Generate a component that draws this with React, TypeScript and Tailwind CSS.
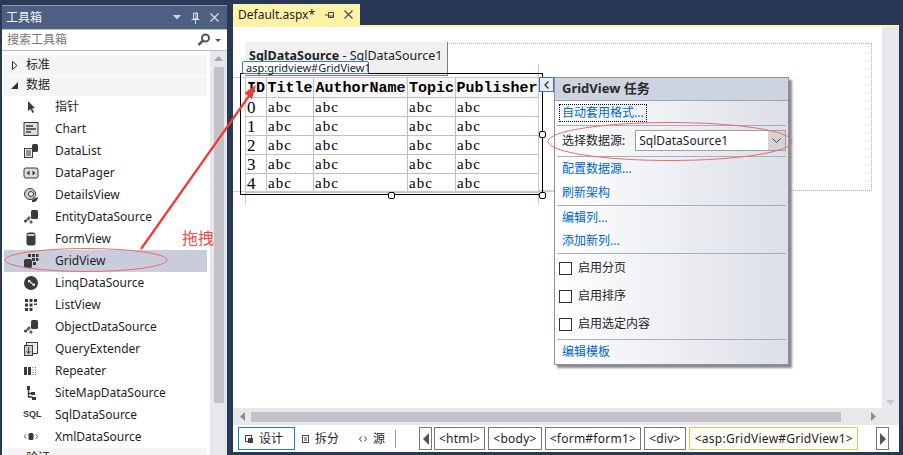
import React from 'react'

const sans = "font-['Noto_Sans','Noto_Sans_CJK_SC',sans-serif]"

function Icon({ name }: { name: string }) {
  const c = '#3a3a3a'
  switch (name) {
    case 'pointer':
      return <svg width="16" height="16" viewBox="0 0 16 16"><path d="M5 2 L5 12 L7.5 10 L9.5 14 L11 13 L9 9.5 L12 9 Z" fill={c} /></svg>
    case 'chart':
      return (
        <svg width="16" height="16" viewBox="0 0 16 16">
          <rect x="1" y="1.5" width="14" height="13" fill="#ddd" stroke={c} strokeWidth="1" />
          <path d="M3 5h7M3 8h10M3 11h5" stroke={c} strokeWidth="1.6" />
        </svg>
      )
    case 'datalist':
      return (
        <svg width="16" height="16" viewBox="0 0 16 16">
          <rect x="1.5" y="5.5" width="8" height="9" fill="#eee" stroke={c} />
          <path d="M3 8h5M3 10h5M3 12h5" stroke={c} />
          <rect x="9" y="1" width="6" height="8" rx="1.5" fill={c} />
        </svg>
      )
    case 'pager':
      return (
        <svg width="16" height="16" viewBox="0 0 16 16">
          <rect x="1" y="3" width="14" height="10" rx="2" fill="#ddd" stroke={c} />
          <path d="M3.5 8l3-2.5v5zM12.5 8l-3-2.5v5z" fill={c} />
        </svg>
      )
    case 'details':
      return (
        <svg width="16" height="16" viewBox="0 0 16 16">
          <circle cx="7" cy="7" r="5.5" fill="#ccc" stroke={c} />
          <circle cx="8" cy="7" r="2.5" fill="#eee" stroke={c} />
          <path d="M9 15a5 5 0 0 0 6-5l-3 1-3 2z" fill={c} />
        </svg>
      )
    case 'source':
      return (
        <svg width="16" height="16" viewBox="0 0 16 16">
          <rect x="8" y="1" width="7" height="9" rx="1.5" fill={c} />
          <path d="M3 10l3-3 2 2-3 3zM6 13l2-2 2 2-2 2z" fill="#666" />
          <circle cx="2.5" cy="12" r="1.5" fill={c} />
        </svg>
      )
    case 'form':
      return <svg width="16" height="16" viewBox="0 0 16 16"><rect x="3.5" y="1.5" width="9" height="13" rx="2.5" fill={c} /><rect x="4.5" y="3" width="7" height="2" fill="#ccc" /></svg>
    case 'grid':
      return (
        <svg width="16" height="16" viewBox="0 0 16 16">
          <path d="M5 1h3v3H5zM9 1h3v3H9zM13 1h2.500v3H13zM9 5h3v3H9zM13 5h2.500v3H13zM10 9h3v3h-3z" fill={c} />
          <rect x="1" y="6" width="8" height="9" rx="2" fill={c} />
        </svg>
      )
    case 'linq':
      return (
        <svg width="16" height="16" viewBox="0 0 16 16">
          <circle cx="8" cy="8" r="7" fill={c} />
          <path d="M5 5h3l-1 1 4 3 1-1v3H9l1-1-4-3-1 1z" fill="#ddd" />
        </svg>
      )
    case 'list':
      return <svg width="16" height="16" viewBox="0 0 16 16"><path d="M2 2h3v3H2zM6.5 2h3v3h-3zM11 2h3v3h-3zM2 6.5h3v3H2zM6.5 6.5h3v3h-3zM11 6.5h3v1.500h-3zM2 11h3v3H2zM6.500 11h3v3h-3z" fill={c} /></svg>
    case 'query':
      return (
        <svg width="16" height="16" viewBox="0 0 16 16">
          <rect x="3.500" y="1.500" width="11" height="11" fill="#eee" stroke={c} />
          <rect x="1.500" y="4.500" width="8" height="10" fill="#ccc" stroke={c} />
          <path d="M5.500 6v6M3.500 10l2 2.500 2-2.500" stroke={c} fill="none" />
        </svg>
      )
    case 'repeater':
      return <svg width="16" height="16" viewBox="0 0 16 16"><path d="M1 4h3v8H1zM5 4h3v8H5z" fill={c} /><path d="M9.500 4h1v1h-1zM12 4h1v1h-1zM9.500 6.500h1v1h-1zM12 6.500h1v1h-1zM9.500 9h1v1h-1zM12 9h1v1h-1zM9.500 11h1v1h-1zM12 11h1v1h-1z" fill="#666" /></svg>
    case 'sitemap':
      return <svg width="16" height="16" viewBox="0 0 16 16"><path d="M4 1h3v4H4zM8 7h4v3H8zM9 12h4v3H9z" fill={c} /><path d="M5.500 5v7h4M5.500 8.500h3" stroke={c} strokeWidth="1.400" fill="none" /></svg>
    case 'xml':
      return (
        <svg width="16" height="16" viewBox="0 0 16 16">
          <rect x="5.500" y="4" width="5" height="7" rx="1.500" fill={c} />
          <path d="M3.500 5.500L1 7.500l2.500 2M12.500 5.500L15 7.500l-2.500 2" stroke="#666" fill="none" />
        </svg>
      )
    default:
      return <span className="text-[9px] font-bold text-[#3a3a3a] font-['Liberation_Sans',sans-serif]">SQL</span>
  }
}

const tools = [
  ['pointer', '指针'],
  ['chart', 'Chart'],
  ['datalist', 'DataList'],
  ['pager', 'DataPager'],
  ['details', 'DetailsView'],
  ['source', 'EntityDataSource'],
  ['form', 'FormView'],
  ['grid', 'GridView'],
  ['linq', 'LinqDataSource'],
  ['list', 'ListView'],
  ['source', 'ObjectDataSource'],
  ['query', 'QueryExtender'],
  ['repeater', 'Repeater'],
  ['sitemap', 'SiteMapDataSource'],
  ['sql', 'SqlDataSource'],
  ['xml', 'XmlDataSource'],
]

function Toolbox() {
  return (
    <div className="w-[225px] h-[455px] overflow-hidden shrink-0 flex flex-col">
      <div className="h-[24px] mt-[5px] bg-[#4d6082] flex items-center pl-[4px] pr-[8px] text-[12px] shrink-0 border-t border-[#8a9ab5]">
        <span className="text-[#f2f4f8]">工具箱</span>
        <div className="ml-auto flex items-center gap-[10px]">
          <svg width="8" height="5" viewBox="0 0 8 5"><path d="M0 0h8L4 4.500z" fill="#cfd6e2" /></svg>
          <svg width="9" height="12" viewBox="0 0 9 12"><path d="M2.500 1h4v6h-4zM0.500 7.500h8M4.500 8v4M5 1v6" stroke="#dfe4ec" fill="none" /></svg>
          <svg width="9" height="9" viewBox="0 0 9 9"><path d="M0.500 0.500l8 8M8.500 0.500l-8 8" stroke="#cfd6e2" strokeWidth="1.400" /></svg>
        </div>
      </div>
      <div className="h-[22px] bg-white border-y border-[#b4c0d4] flex items-center pl-[5px] pr-[6px] text-[12px] text-[#777] shrink-0">
        <span>搜索工具箱</span>
        <svg className="ml-auto" width="15" height="14" viewBox="0 0 15 14">
          <circle cx="8.500" cy="5" r="3.500" fill="none" stroke="#555" strokeWidth="2" />
          <path d="M6 7.500L1.500 12" stroke="#555" strokeWidth="2.500" />
        </svg>
        <svg className="ml-[3px]" width="6" height="3" viewBox="0 0 6 3"><path d="M0 0h6L3 3z" fill="#555" /></svg>
      </div>
      <div className="flex-1 bg-white flex pl-[2px] min-h-0">
        <div className="w-[203px] pt-[4px] text-[12px] text-[#1e1e1e]">
          <div className="h-[20px] mb-[1px] bg-[#f5f5f5] flex items-center">
            <svg className="ml-[8px] mr-[6px]" width="6" height="9" viewBox="0 0 6 9"><path d="M0.500 0.500L5 4.500L0.500 8.500z" fill="none" stroke="#333" /></svg>
            <span className="ml-[2px]">标准</span>
          </div>
          <div className="h-[20px] pb-[2px] bg-[#f5f5f5] flex items-center">
            <svg className="ml-[7px] mr-[6px]" width="7" height="7" viewBox="0 0 7 7"><path d="M7 0v7H0z" fill="#333" /></svg>
            <span className="ml-[2px]">数据</span>
          </div>
          {tools.map(([icon, label]) => (
            <div key={label} className={`h-[22px] flex items-center ${label === 'GridView' ? 'bg-[#c9ccdb]' : ''}`}>
              <div className="w-[51px] pl-[19px] flex items-center"><Icon name={icon} /></div>
              <span>{label}</span>
            </div>
          ))}
          <div className="h-[20px] bg-[#f5f5f5] flex items-center">
            <svg className="ml-[7px] mr-[6px]" width="7" height="7" viewBox="0 0 7 7"><path d="M7 0v7H0z" fill="#333" /></svg>
            <span className="ml-[2px]">验证</span>
          </div>
        </div>
        <div className="ml-[3px] w-[17px] h-[404px] bg-[#e8e8ec] flex flex-col items-center pt-[5px]">
          <svg width="9" height="5" viewBox="0 0 9 5"><path d="M4.500 0L9 5H0z" fill="#a5a7ad" /></svg>
          <div className="w-[10px] h-[336px] mt-[6px] bg-[#c2c3c9]" />
        </div>
      </div>
    </div>
  )
}

const rows = ['0', '1', '2', '3', '4']
const tdClass = "border border-[#c0c0c0] px-[1px] pt-[1px] h-[19px] align-middle font-['Liberation_Serif',serif]"

function Grid() {
  const widths = [21, 47, 94, 48, 83]
  return (
    <table className="absolute left-[12px] top-[50px] border-collapse table-fixed w-[293px] bg-white text-black font-['Liberation_Mono',monospace]">
      <colgroup>{widths.map((w, i) => <col key={i} style={{ width: w }} />)}</colgroup>
      <tbody>
        <tr className="h-[20px] text-[15px] font-bold leading-[15px] bg-[#f8f8f8]">
          {['ID', 'Title', 'AuthorName', 'Topic', 'Publisher'].map(h => (
            <td key={h} className="border border-[#c0c0c0] p-0 pt-[2px] text-center whitespace-nowrap overflow-hidden">{h}</td>
          ))}
        </tr>
        {rows.map(r => (
          <tr key={r} className="h-[19px] text-[15px] tracking-[1px] leading-[15px]">
            <td className={`${tdClass} text-[17px] leading-[15px]`}>{r}</td>
            <td className={tdClass}>abc</td>
            <td className={tdClass}>abc</td>
            <td className={tdClass}>abc</td>
            <td className={tdClass}>abc</td>
          </tr>
        ))}
      </tbody>
    </table>
  )
}

const handle = 'absolute w-[7px] h-[7px] bg-white border border-black rounded-[2px]'
const link = 'text-[#0066cc] text-[12px] leading-[16px]'
const sep = 'h-[1px] bg-[#a5afc0] mx-[2px]'

function TaskPanel() {
  return (
    <div className="absolute left-[321px] top-[50px] w-[235px] h-[288px] border border-[#8792a8] shadow-[3px_3px_2px_rgba(90,90,90,0.7)] bg-gradient-to-r from-white to-[#dcdfe7] flex flex-col text-[12px] text-[#1e1e1e]">
      <div className="h-[23px] bg-[#cdd3df] border-b border-[#99a3b5] flex items-center pl-[7px] font-bold text-[13px] text-[#2a2a2a] shrink-0">GridView 任务</div>
      <div className="h-[24px] pl-[4px] flex items-center">
        <span className={`${link} border border-dotted border-black px-[2px]`}>自动套用格式...</span>
      </div>
      <div className={sep} />
      <div className="h-[30px] flex items-center pl-[7px]">
        <span>选择数据源:</span>
        <div className="ml-[10px] w-[151px] h-[21px] bg-white border border-[#a0a0a0] flex items-center pl-[3px]">
          <span>SqlDataSource1</span>
          <div className="ml-auto w-[17px] h-[19px] bg-[#d4d4d4] flex items-center justify-center">
            <svg width="9" height="5" viewBox="0 0 9 5"><path d="M0.500 0.500L4.500 4.500L8.500 0.500" fill="none" stroke="#444" /></svg>
          </div>
        </div>
      </div>
      <div className={sep} />
      <div className="h-[24px] pl-[7px] flex items-center"><span className={link}>配置数据源...</span></div>
      <div className="h-[24px] pl-[7px] flex items-center"><span className={link}>刷新架构</span></div>
      <div className={sep} />
      <div className="h-[24px] pl-[7px] flex items-center"><span className={link}>编辑列...</span></div>
      <div className="h-[24px] pl-[7px] flex items-center"><span className={link}>添加新列...</span></div>
      <div className={sep} />
      {['启用分页', '启用排序', '启用选定内容'].map(t => (
        <div key={t} className="h-[28px] flex items-center pl-[4px]">
          <div className="w-[13px] h-[13px] border border-[#333] mr-[6px]" />
          <span>{t}</span>
        </div>
      ))}
      <div className={`${sep} mt-[1px]`} />
      <div className="h-[24px] pl-[7px] flex items-center"><span className={link}>编辑模板</span></div>
    </div>
  )
}

function Designer() {
  return (
    <div className="relative flex-1 bg-white overflow-hidden">
      {/* design surface, offsets are relative to x=233 y=27 */}
      <div className="absolute left-[214px] top-[16px] w-[425px] h-[148px] border-t border-r border-b border-dotted border-[#b0b0b0]" />
      <div className="absolute left-[12px] top-[15px] w-[203px] h-[34px] bg-[#f0f0f0] border-r border-b border-[#808080] pl-[4px] pt-[5px] text-[12.500px] leading-[18px] text-[#222] whitespace-nowrap">
        <b>SqlDataSource</b> - SqlDataSource1
      </div>
      <div className="absolute left-[9px] top-[34px] w-[127px] h-[13px] bg-white border border-[#3a78c8] rounded-[2px] text-[11px] leading-[11px] pl-[3px] text-[#222] z-10 whitespace-nowrap">asp:gridview#GridView1</div>
      <Grid />
      <div className="absolute left-0 top-[50px] w-[321px] h-[1px] bg-[#dcc4c4]" />
      <div className="absolute left-0 top-[164px] w-[321px] h-[1px] bg-[#dcc4c4]" />
      <div className="absolute left-[12px] top-[37px] w-[1px] h-[141px] bg-[#dcc4c4]" />
      <div className="absolute left-[305px] top-[37px] w-[1px] h-[141px] bg-[#dcc4c4]" />
      <div className="absolute left-[7px] top-[46px] w-[303px] h-[122px] border border-black" />
      <div className={`${handle} left-[306px] top-[104px]`} />
      <div className={`${handle} left-[155px] top-[165px]`} />
      <div className={`${handle} left-[306px] top-[165px]`} />
      <div className="absolute left-[306px] top-[50px] w-[15px] h-[15px] bg-[#e8ecf4] border border-[#3a78c8] flex items-center justify-center">
        <svg width="5" height="8" viewBox="0 0 5 8"><path d="M4.500 0.500L1 4l3.500 3.500" fill="none" stroke="#223" strokeWidth="1.200" /></svg>
      </div>
      <TaskPanel />
    </div>
  )
}

const crumbs = ['<html>', '<body>', '<form#form1>', '<div>']

function BottomBar() {
  return (
    <div className="h-[27px] bg-white flex items-center pl-[5px] text-[12px] text-[#1e1e1e] shrink-0">
      <div className="w-[57px] h-[23px] border border-[#1a7fd4] flex items-center pl-[6px] gap-[6px]">
        <svg width="8" height="8" viewBox="0 0 8 8"><rect x="0.500" y="0.500" width="6" height="6" fill="none" stroke="#444" /><rect x="3" y="3" width="5" height="5" fill="#444" /></svg>
        <span>设计</span>
      </div>
      <div className="w-[59px] flex items-center pl-[7px] gap-[6px]">
        <svg width="7" height="8" viewBox="0 0 7 8"><rect x="0.500" y="0.500" width="6" height="7" fill="none" stroke="#444" /><path d="M2 3h3M2 5h3" stroke="#444" /></svg>
        <span>拆分</span>
      </div>
      <div className="w-[41px] flex items-center pl-[5px] gap-[6px]">
        <svg width="8" height="6" viewBox="0 0 8 6"><path d="M2.500 0.500L0.500 3l2 2.500M5.500 0.500L7.500 3l-2 2.500" fill="none" stroke="#444" /></svg>
        <span>源</span>
      </div>
      <div className="w-[1px] h-[18px] bg-[#999]" />
      <div className="ml-[23px] w-[13px] h-[23px] border border-[#777] flex items-center justify-center">
        <svg width="6" height="12" viewBox="0 0 6 12"><path d="M6 0v12L0 6z" fill="#555" /></svg>
      </div>
      <div className="ml-[2px] flex gap-[3px] tracking-[0.25px]">
        {crumbs.map(c => (
          <div key={c} className="h-[23px] px-[4px] border border-[#777] flex items-center">{c}</div>
        ))}
        <div className="h-[23px] pl-[5px] pr-[4px] border border-[#e5c365] bg-[#fffdf5] flex items-center">{'<asp:GridView#GridView1>'}</div>
      </div>
      <div className="ml-auto mr-[10px] w-[13px] h-[23px] border border-[#777] flex items-center justify-center">
        <svg width="6" height="12" viewBox="0 0 6 12"><path d="M0 0v12L6 6z" fill="#555" /></svg>
      </div>
    </div>
  )
}

function Editor() {
  return (
    <div className="ml-[6px] w-[666px] flex flex-col h-[452px]">
      <div className="h-[25px] pt-[4px] shrink-0">
        <div className="w-[127px] h-[21px] bg-[#fdf3a8] flex items-center pl-[5px] text-[12px] text-[#1e1e1e]">
          <span>Default.aspx*</span>
          <svg className="ml-[10px]" width="9" height="8" viewBox="0 0 9 8"><path d="M0 4h3M3.500 1.500v5M3.500 1.500h5v5h-5M3.500 5h5" stroke="#444" fill="none" /></svg>
          <svg className="ml-[10px]" width="9" height="9" viewBox="0 0 9 9"><path d="M0.500 0.500l8 8M8.500 0.500l-8 8" stroke="#555" strokeWidth="1.400" /></svg>
        </div>
      </div>
      <div className="h-[2px] bg-[#fdf3a8] shrink-0" />
      <div className="flex-1 flex min-h-0">
        <Designer />
        <div className="w-[17px] bg-[#e8e8ec] flex flex-col items-center justify-end pb-[3px]">
          <svg width="9" height="5" viewBox="0 0 9 5"><path d="M0 0h9L4.500 5z" fill="#c8c9ce" /></svg>
        </div>
      </div>
      <div className="h-[17px] bg-[#e8e8ec] flex items-center px-[7px] shrink-0">
        <svg width="5" height="9" viewBox="0 0 5 9"><path d="M5 0v9L0 4.500z" fill="#8a8c92" /></svg>
        <div className="ml-[6px] w-[590px] h-[10px] bg-[#c2c3c9]" />
        <svg className="ml-[30px]" width="5" height="9" viewBox="0 0 5 9"><path d="M0 0v9l5-4.500z" fill="#8a8c92" /></svg>
      </div>
      <BottomBar />
    </div>
  )
}

function Annotations() {
  return (
    <svg className="absolute inset-0 pointer-events-none z-20" width="903" height="455" viewBox="0 0 903 455">
      <ellipse cx="86" cy="260" rx="81" ry="11.500" fill="none" stroke="#ef6a6a" strokeWidth="1" />
      <ellipse cx="670" cy="141.500" rx="122" ry="19" fill="none" stroke="#ef6a6a" strokeWidth="1" />
      <path d="M141 249L249 96" stroke="#f03a3a" strokeWidth="2.200" />
      <path d="M256 85L244.500 93L252 99Z" fill="#f03a3a" />
    </svg>
  )
}

export default function App() {
  return (
    <div className={`relative w-[903px] h-[455px] bg-[#293955] flex pl-[2px] overflow-hidden ${sans}`}>
      <Toolbox />
      <Editor />
      <Annotations />
      <span className="absolute left-[182px] top-[228px] text-[16px] leading-[20px] text-[#f04a4a] z-20">拖拽</span>
    </div>
  )
}
